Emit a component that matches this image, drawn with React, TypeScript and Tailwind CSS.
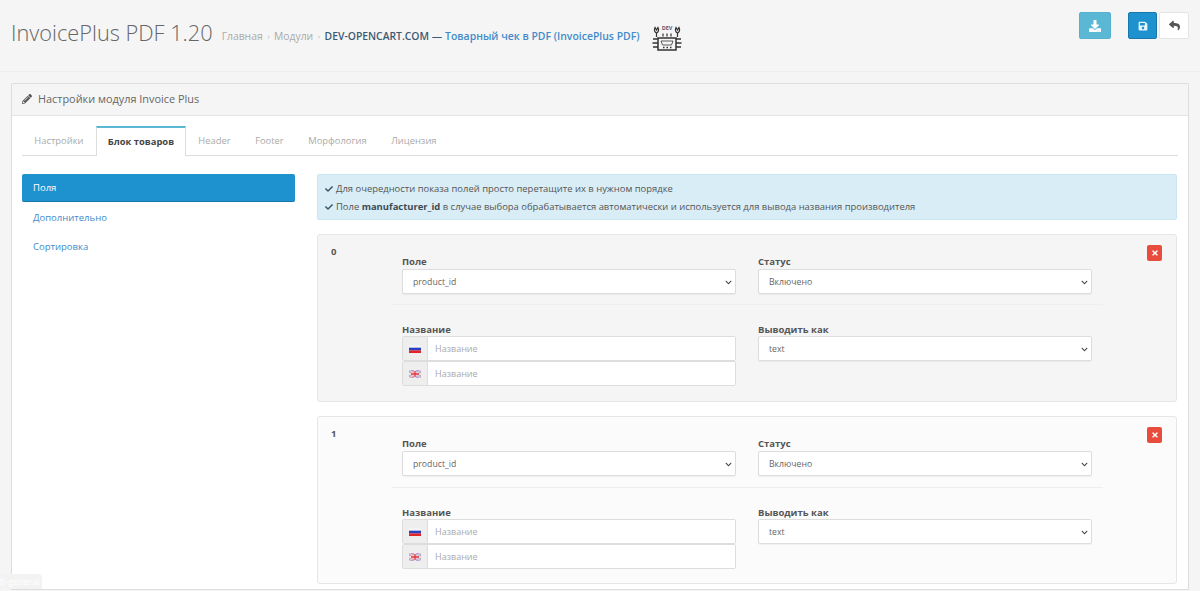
import type { ReactNode } from 'react'
import { FaCheck, FaChevronDown, FaDownload, FaPencilAlt, FaReply, FaSave, FaTimes } from 'react-icons/fa'

const TABS = ['Настройки', 'Блок товаров', 'Header', 'Footer', 'Морфология', 'Лицензия']

function FlagRu() {
  return (
    <svg width="12" height="8" viewBox="0 0 12 8" className="block">
      <rect width="12" height="2.7" y="0" fill="#f4f4f8" />
      <rect width="12" height="2.7" y="2.7" fill="#2a3fc0" />
      <rect width="12" height="2.6" y="5.4" fill="#e0242c" />
    </svg>
  )
}

function FlagEn() {
  return (
    <svg width="12" height="8" viewBox="0 0 12 8" className="block">
      <rect width="12" height="8" fill="#a5a5d6" />
      <path d="M0 0L12 8M12 0L0 8" stroke="#eec4c8" strokeWidth="1.4" />
      <path d="M6 0V8M0 4H12" stroke="#f6dede" strokeWidth="2.4" />
      <path d="M6 1V7M2 4H10" stroke="#e0343c" strokeWidth="1.3" />
    </svg>
  )
}

function DevLogo() {
  return (
    <svg width="30" height="28" viewBox="0 0 30 28" fill="none" stroke="#333" strokeWidth="1.2" className="block">
      <path d="M3 3.5C1.5 6 3 8.5 4.5 9C6 8.5 7.5 6 6 3.5L4.5 6Z" />
      <path d="M24 3.5C22.5 6 24 8.5 25.5 9C27 8.5 28.5 6 27 3.5L25.5 6Z" />
      <path d="M4.5 9V13M25.5 9V13M11 9.5V12.5M15 9.5V12.5M19 9.5V12.5" />
      <path d="M6 14H24V26H6Z" strokeWidth="1.5" />
      <path d="M9 17H21L19.5 21H10.5Z" strokeWidth="0.8" />
      <path d="M1 15H6M0.5 19H6M1 23H6M24 15H29M24 19H29.5M24 23H29" strokeWidth="1.4" />
      <path d="M11 23.5h1.5M14.5 23.5h1.5M18 23.5h1.5" strokeWidth="1.5" />
      <text x="15" y="6" textAnchor="middle" fontSize="5.5" fontWeight="700" fill="#5a5a7a" stroke="none" fontFamily="'Open Sans', sans-serif">DEV</text>
    </svg>
  )
}

function Field({ label, value, leading }: { label: string; value: string; leading: string }) {
  return (
    <div className="w-[334px]">
      <div className={`text-[9.5px] font-bold text-[#555] ${leading}`}>{label}</div>
      <div className="relative">
        <select
          defaultValue={value}
          className="block w-full h-[25px] pl-[10px] pt-[2px] appearance-none bg-white border border-[#ddd] rounded-[2px] text-[8.7px] text-[#666] shadow-[0_1px_1px_rgba(0,0,0,0.05)]"
        >
          <option>{value}</option>
        </select>
        <FaChevronDown size={7} color="#444" className="absolute right-[4px] top-[10px]" />
      </div>
    </div>
  )
}

function LangInput({ flag }: { flag: ReactNode }) {
  return (
    <div className="flex h-[25px] border border-[#ddd] rounded-[2px] bg-white">
      <div className="w-[25px] bg-[#eee] border-r border-[#ddd] flex items-center justify-center">{flag}</div>
      <input
        placeholder="Название"
        className="flex-1 min-w-0 px-[7px] text-[9px] text-[#666] placeholder:text-[#aaa] outline-none bg-white"
      />
    </div>
  )
}

function Row({ index, bg, gap }: { index: number; bg: string; gap: string }) {
  return (
    <div className={`flex h-[168px] border border-[#e6e6e6] rounded-[3px] ${bg}`}>
      <div className="w-[84px] pl-[13px] pt-[10px] text-[9.5px] leading-[13px] font-bold text-[#555]">{index}</div>
      <div className="w-[711px] -ml-[10px] pt-[19px]">
        <div className={`flex gap-[22px] pl-[10px] border-b border-[#eeeeee] ${gap}`}>
          <Field label="Поле" value="product_id" leading="leading-[15px]" />
          <Field label="Статус" value="Включено" leading="leading-[15px]" />
        </div>
        <div className="flex gap-[22px] pl-[10px] pt-[18px]">
          <div className="w-[334px]">
            <div className="text-[9.5px] leading-[13px] font-bold text-[#555]">Название</div>
            <LangInput flag={<FlagRu />} />
            <LangInput flag={<FlagEn />} />
          </div>
          <Field label="Выводить как" value="text" leading="leading-[13px]" />
        </div>
      </div>
      <div className="flex-1 flex justify-end pr-[14px] pt-[10px]">
        <button className="w-[15px] h-[16px] bg-[#e74c3c] rounded-[2px] flex items-center justify-center">
          <FaTimes size={8} color="#fff" />
        </button>
      </div>
    </div>
  )
}

export default function App() {
  return (
    <div className="relative h-[591px] w-[1200px] overflow-hidden bg-[#f5f5f5] font-['Open_Sans',sans-serif] text-[#666]">
      <header className="h-[72px] border-b border-[#eeeeee] flex items-start pl-[11px] pr-[11px]">
        <h1 className="mt-[18px] text-[21.75px] leading-[30px] font-light text-[#666] whitespace-nowrap">InvoicePlus PDF 1.20</h1>
        <div className="mt-[29px] ml-[9px] flex items-center text-[10.35px] leading-[14px] whitespace-nowrap">
          <span className="text-[#aaa]">Главная</span>
          <span className="text-[#bbb] mx-[4.5px] text-[8px]">›</span>
          <span className="text-[#aaa]">Модули</span>
          <span className="text-[#bbb] mx-[4.5px] text-[8px]">›</span>
          <span className="font-semibold text-[#3d5a73]">DEV-OPENCART.COM —</span>
          <span className="font-semibold text-[#428bca] ml-[3px] text-[10.45px]">Товарный чек в PDF (InvoicePlus PDF)</span>
        </div>
        <div className="mt-[24px] ml-[12px]"><DevLogo /></div>
        <div className="ml-auto mt-[12px] flex">
          <button className="w-[32px] h-[27px] bg-[#5bb8d4] border border-[#55b2ce] rounded-[2px] flex items-center justify-center">
            <FaDownload size={12} color="#fff" />
          </button>
          <button className="ml-[17px] w-[29px] h-[27px] bg-[#1e91cf] border border-[#1978ab] rounded-[2px] flex items-center justify-center">
            <FaSave size={10} color="#e8f4fb" />
          </button>
          <button className="ml-[2px] w-[30px] h-[27px] bg-white border border-[#e4e4e4] rounded-[2px] flex items-center justify-center">
            <FaReply size={11} color="#555" />
          </button>
        </div>
      </header>

      <main className="mt-[11px] mx-[11px] bg-white border border-[#dddddd] rounded-t-[2px] h-[507px]">
        <div className="h-[32px] pb-px bg-[#f5f5f5] border-b border-[#e4e4e4] flex items-center pl-[10px] text-[10.9px] text-[#666]">
          <FaPencilAlt size={10} color="#555" className="mr-[6px]" />
          Настройки модуля Invoice Plus
        </div>
        <div className="pt-[10px] px-[10px]">
          <div className="flex h-[30px] border-b border-[#dddddd] text-[9.4px]">
            {TABS.map((tab, i) =>
              i === 1 ? (
                <div key={tab} className="h-[30px] px-[11px] pt-px bg-white border-x border-[#ddd] border-t-2 border-t-[#5bb8d4] font-bold text-[#444] flex items-center">
                  {tab}
                </div>
              ) : (
                <div key={tab} className="px-[12.3px] pt-[2px] text-[#aaa] flex items-center">{tab}</div>
              )
            )}
          </div>
          <div className="flex mt-[18px]">
            <nav className="w-[273px] text-[9.5px] shrink-0">
              <div className="h-[28px] pt-[2px] bg-[#1e91cf] border-b border-[#1978ab] text-white rounded-[2px] pl-[11px] flex items-center">Поля</div>
              <div className="h-[29px] mt-[1px] pt-[2px] pl-[11px] text-[#428bca] flex items-center">Дополнительно</div>
              <div className="h-[29px] pt-[2px] pl-[11px] text-[#428bca] flex items-center">Сортировка</div>
            </nav>
            <section className="ml-[22px] w-[860px] flex flex-col">
              <div className="h-[46px] bg-[#d9edf7] border border-[#c9e6f2] rounded-[2px] pl-[7px] pt-[4.5px] text-[9.44px] leading-[18px] text-[#555]">
                <div className="flex items-center">
                  <FaCheck size={8} color="#3a5a6a" className="mr-[3px]" />
                  Для очередности показа полей просто перетащите их в нужном порядке
                </div>
                <div className="flex items-center">
                  <FaCheck size={8} color="#3a5a6a" className="mr-[3px]" />
                  Поле&nbsp;<b className="text-[#3d4a52]">manufacturer_id</b>&nbsp;в случае выбора обрабатывается автоматически и используется для вывода названия производителя
                </div>
              </div>
              <div className="mt-[14px]"><Row index={0} bg="bg-[#f5f5f5]" gap="pb-[10px]" /></div>
              <div className="mt-[14px]"><Row index={1} bg="bg-[#fbfbfb]" gap="pb-[11px]" /></div>
            </section>
          </div>
        </div>
      </main>
      <div className="absolute left-0 bottom-[2px] w-[42px] h-[15px] bg-[#f3f3f3] rounded-tr-[3px] text-[9px] text-white overflow-hidden leading-[15px] whitespace-nowrap">b-general</div>
    </div>
  )
}
